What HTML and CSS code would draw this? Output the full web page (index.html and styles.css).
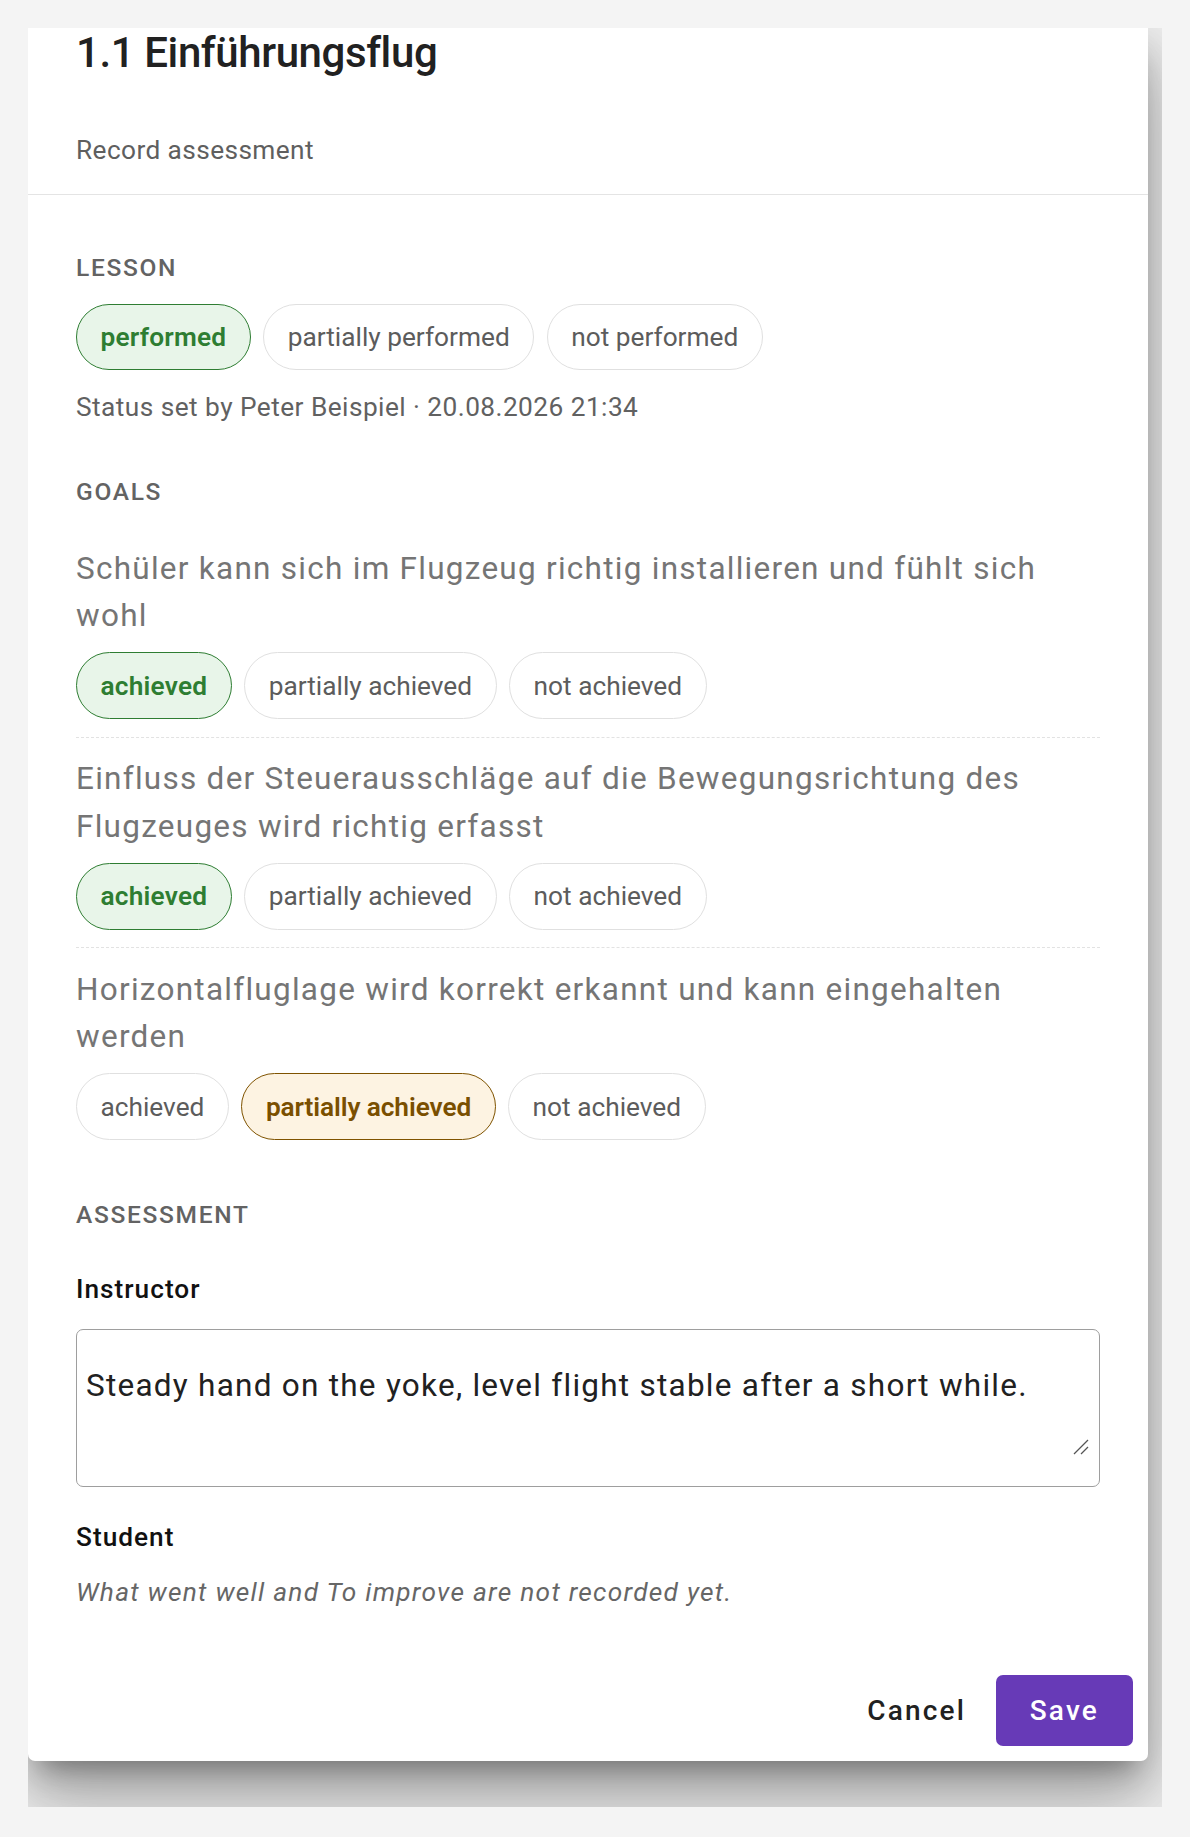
FILE: index.html
```html
<!DOCTYPE html>
<html lang="de">
<head>
<meta charset="utf-8">
<title>1.1 Einführungsflug – Record assessment</title>
<link rel="stylesheet" href="styles.css">
</head>
<body>
<div class="overlay">
  <div class="dialog">
    <header class="dialog-header">
      <h1 class="dialog-title">1.1 Einführungsflug</h1>
      <p class="dialog-subtitle">Record assessment</p>
    </header>
    <div class="dialog-content">
      <section class="section section-lesson">
        <h2 class="section-label">Lesson</h2>
        <div class="chips">
          <button class="chip chip-good">performed</button>
          <button class="chip">partially performed</button>
          <button class="chip">not performed</button>
        </div>
        <p class="status-meta">Status set by Peter Beispiel · 20.08.2026 21:34</p>
      </section>

      <section class="section section-goals">
        <h2 class="section-label goals-label">Goals</h2>
        <div class="goal">
          <p class="goal-text">Schüler kann sich im Flugzeug richtig installieren und fühlt sich wohl</p>
          <div class="chips">
            <button class="chip chip-good">achieved</button>
            <button class="chip">partially achieved</button>
            <button class="chip">not achieved</button>
          </div>
        </div>
        <div class="goal">
          <p class="goal-text">Einfluss der Steuerausschläge auf die Bewegungsrichtung des Flugzeuges wird richtig erfasst</p>
          <div class="chips">
            <button class="chip chip-good">achieved</button>
            <button class="chip">partially achieved</button>
            <button class="chip">not achieved</button>
          </div>
        </div>
        <div class="goal">
          <p class="goal-text">Horizontalfluglage wird korrekt erkannt und kann eingehalten werden</p>
          <div class="chips">
            <button class="chip">achieved</button>
            <button class="chip chip-partial">partially achieved</button>
            <button class="chip">not achieved</button>
          </div>
        </div>
      </section>

      <section class="section section-assessment">
        <h2 class="section-label">Assessment</h2>
        <label class="field-label" for="instructor">Instructor</label>
        <div class="textarea-wrap">
          <textarea id="instructor" class="field-textarea" rows="2">Steady hand on the yoke, level flight stable after a short while.</textarea>
          <svg class="resize-grip" width="16" height="16" viewBox="0 0 16 16" aria-hidden="true">
            <line x1="1" y1="15" x2="15" y2="1" stroke="#555" stroke-width="1.3"/>
            <line x1="8" y1="15" x2="15" y2="8" stroke="#555" stroke-width="1.3"/>
          </svg>
        </div>
        <h3 class="field-label student-label">Student</h3>
        <p class="empty-note">What went well and To improve are not recorded yet.</p>
      </section>
    </div>
    <div class="dialog-actions">
      <button class="btn btn-text">Cancel</button>
      <button class="btn btn-primary">Save</button>
    </div>
  </div>
</div>
</body>
</html>
```

FILE: styles.css
```css
* { box-sizing: border-box; }

html, body {
  margin: 0;
  padding: 0;
  background: #f4f4f4;
  font-family: Roboto, "Noto Sans", "Liberation Sans", Arial, sans-serif;
}

.overlay {
  margin: 28px 0 0 28px;
  width: 1134px;
  height: 1779px;
  overflow: hidden;
}

.dialog {
  width: 1120px;
  background: #ffffff;
  border-radius: 0 0 7px 7px;
  box-shadow:
    0 19px 26px -12px rgba(0, 0, 0, 0.34),
    0 42px 66px 5px rgba(0, 0, 0, 0.2),
    0 16px 80px 14px rgba(0, 0, 0, 0.16);
}

.dialog-header {
  padding: 0 48px 24px;
  border-bottom: 1.75px solid #e4e4e4;
}

.dialog-title {
  margin: 0;
  font-size: 42px;
  line-height: 50px;
  font-weight: 500;
  letter-spacing: -0.4px;
  color: #212121;
}

.dialog-subtitle {
  margin: 52px 0 0;
  font-size: 26.25px;
  line-height: 40px;
  letter-spacing: 0.4px;
  color: #5f5f5f;
}

.dialog-content {
  padding: 57.9px 48px 0;
}

.section-label {
  margin: 0;
  font-size: 24.5px;
  line-height: 30px;
  font-weight: 500;
  letter-spacing: 1.7px;
  text-transform: uppercase;
  color: #636363;
}

.chips {
  display: flex;
  gap: 12.5px;
}

.section-lesson .chips { margin-top: 20.7px; }

.chip {
  height: 66.8px;
  padding: 0 23.5px;
  border: 1.75px solid #e0e0e0;
  border-radius: 34px;
  background: #ffffff;
  font-family: inherit;
  font-size: 26.25px;
  font-weight: 400;
  letter-spacing: 0;
  color: #5c5c5c;
  display: inline-flex;
  align-items: center;
}

.chip-good {
  background: #e8f5e9;
  border-color: #2e7d32;
  color: #2e7d32;
  font-weight: 600;
  letter-spacing: 0.2px;
}

.chip-partial {
  background: #fdf3e2;
  border-color: #7f5300;
  color: #7a4f00;
  font-weight: 600;
  letter-spacing: -0.1px;
}

.status-meta {
  margin: 19px 0 0;
  font-size: 26.25px;
  line-height: 36px;
  letter-spacing: 0.45px;
  color: #616161;
}

.section-goals { margin-top: 51.5px; }

.goals-label { margin-bottom: 37.9px; }

.goal {
  padding: 17.6px 0;
  border-bottom: 1.75px dashed #e2e2e2;
}

.goal:first-of-type { padding-top: 0; }

.goal:last-child {
  padding-bottom: 0;
  border-bottom: none;
}

.goal-text {
  margin: 0;
  font-size: 31.5px;
  line-height: 47.25px;
  letter-spacing: 1.26px;
  color: #757575;
}

.goal .chips { margin-top: 13px; }

.section-assessment { margin-top: 60.4px; }

.field-label {
  display: block;
  margin: 40.2px 0 0;
  font-size: 26.25px;
  line-height: 36px;
  font-weight: 500;
  letter-spacing: 1px;
  color: #111111;
}

.textarea-wrap {
  position: relative;
  margin-top: 22.7px;
}

.field-textarea {
  display: block;
  width: 100%;
  height: 158px;
  padding: 31.3px 9px 27px;
  border: 1.75px solid #9e9e9e;
  border-radius: 7px;
  font-family: inherit;
  font-size: 31.5px;
  line-height: 47.25px;
  letter-spacing: 1.25px;
  color: #212121;
  resize: none;
}

.resize-grip {
  position: absolute;
  right: 11px;
  bottom: 32px;
}

.student-label { margin-top: 31.7px; }

.empty-note {
  margin: 19px 0 0;
  font-size: 26.25px;
  line-height: 36px;
  font-style: italic;
  letter-spacing: 1.27px;
  color: #666666;
}

.dialog-actions {
  display: flex;
  justify-content: flex-end;
  gap: 16px;
  padding: 65px 15.5px 15.5px;
}

.btn {
  height: 71px;
  border: none;
  border-radius: 7px;
  font-family: inherit;
  font-size: 28px;
  font-weight: 500;
  letter-spacing: 2.2px;
  cursor: pointer;
}

.btn-text {
  padding: 0 14px;
  background: transparent;
  color: #212121;
}

.btn-primary {
  padding: 0 33.5px;
  background: #673ab7;
  color: #ffffff;
}
```
